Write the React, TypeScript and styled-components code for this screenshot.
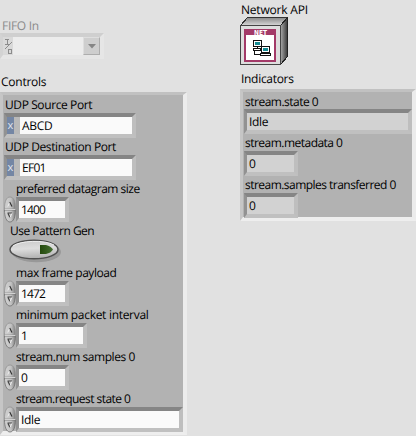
import React from "react";
import styled, { createGlobalStyle } from "styled-components";

const Global = createGlobalStyle`
  body { margin: 0; background: #e1e1e1; }
  * { box-sizing: border-box; }
`;

const Screen = styled.div`
  display: flex;
  justify-content: space-between;
  width: 416px;
  height: 436px;
  overflow: hidden;
  background: #e1e1e1;
  color: #000;
  font-family: "Open Sans", "Noto Sans", sans-serif;
  font-size: 12px;
  text-rendering: geometricPrecision;
`;

const LeftColumn = styled.div`
  width: 187px;
  padding-top: 16px;
`;

const RightColumn = styled.div`
  width: 176px;
`;

const Text = styled.div<{ $x?: number; $track?: number; $h?: number; $top?: number; $dim?: boolean }>`
  height: ${(p) => p.$h ?? 18}px;
  padding-top: ${(p) => p.$top ?? 1}px;
  line-height: 17px;
  padding-left: ${(p) => p.$x ?? 1}px;
  letter-spacing: ${(p) => p.$track ?? -0.4}px;
  color: ${(p) => (p.$dim ? "#8b8b8b" : "#000")};
  white-space: nowrap;
`;

const Cluster = styled.div<{ $h: number }>`
  height: ${(p) => p.$h}px;
  border: solid;
  border-width: 3px 4px 4px 3px;
  border-color: #c1c1c1 #ececec #eeeeee #c6c6c6;
  background: #b2b2b2;
`;

const Item = styled.div<{ $h?: number }>`
  height: ${(p) => p.$h ?? 42}px;
`;

const Line = styled.div`
  display: flex;
  padding-left: 1px;
`;

const Field = styled.div<{ $w: number; $readOnly?: boolean }>`
  display: flex;
  width: ${(p) => p.$w}px;
  height: 25px;
  border: solid;
  border-width: 4px 4px 4px 3px;
  border-color: #858585 #bebebe #c0c0c0 #929292;
  background: ${(p) => (p.$readOnly ? "#d2d2d2" : "#fafafa")};
`;

const Value = styled.span<{ $track?: number }>`
  padding-left: 2px;
  line-height: 17px;
  letter-spacing: ${(p) => p.$track ?? -0.3}px;
`;

const Radix = styled.span`
  width: 13px;
  border-right: 6px solid #b9b9b9;
  background: #7486a4;
  color: #e3e8f0;
  font-size: 11px;
  line-height: 17px;
  text-align: center;
`;

const FifoField = styled.div`
  display: flex;
  width: 104px;
  height: 26px;
  border: solid;
  border-width: 4px 4px 4px 3px;
  border-color: #cfcfcf #e6e6e6 #e6e6e6 #d3d3d3;
  background: #ececec;
`;

const IoMark = styled.svg`
  flex: none;
  width: 10px;
  height: 18px;
  background: #d9d9d9;
`;

const DropButton = styled.div`
  display: flex;
  align-items: center;
  justify-content: center;
  width: 17px;
  height: 18px;
  margin-left: auto;
  border: 1px solid;
  border-color: #dedede #adadad #adadad #dedede;
  background: #cecece;
`;

const SpinSvg = styled.svg`
  flex: none;
  width: 12px;
  height: 27px;
  margin-top: -1px;
`;

const ToggleSvg = styled.svg`
  display: block;
  width: 56px;
  height: 26px;
  margin-left: 5px;
`;

const ApiSvg = styled.svg`
  display: block;
  width: 50px;
  height: 50px;
  margin-top: -1px;
`;

function Spinner() {
  return (
    <SpinSvg viewBox="0 0 12 27">
      <defs>
        <linearGradient id="spin">
          <stop offset="0" stopColor="#d2d2d2" />
          <stop offset=".6" stopColor="#c2c2c2" />
          <stop offset="1" stopColor="#7c7c7c" />
        </linearGradient>
      </defs>
      <path d="M.5 13C.5 5 2.500 1 6 1s5.500 4 5.500 12z" fill="url(#spin)" stroke="#909090" strokeWidth=".8" />
      <path d="M.5 14C.5 21 2.500 26 6 26s5.500-5 5.500-12z" fill="url(#spin)" stroke="#707070" strokeWidth=".8" />
      <path d="M1 13.500h10" stroke="#d2d2d2" />
      <path d="M3.800 10.500L5.800 6" stroke="#eeeeee" />
      <path d="M5.700 6L8 10.500" fill="none" stroke="#333" strokeWidth="1.200" />
      <path d="M3.500 17H8M4 17.500L6 21.500" fill="none" stroke="#444" strokeWidth="1.200" />
      <path d="M6 21.500L7.800 17.500" stroke="#eeeeee" />
    </SpinSvg>
  );
}

function Toggle() {
  return (
    <ToggleSvg viewBox="0 0 56 26">
      <defs>
        <linearGradient id="face" x1="0" y1="0" x2=".15" y2="1">
          <stop offset="0" stopColor="#c8c8c8" />
          <stop offset=".5" stopColor="#dddddd" />
          <stop offset="1" stopColor="#b2b2b2" />
        </linearGradient>
        <linearGradient id="led">
          <stop offset="0" stopColor="#23480c" />
          <stop offset="1" stopColor="#456f30" />
        </linearGradient>
      </defs>
      <ellipse cx="28.500" cy="13" rx="24.500" ry="10.200" fill="#989898" />
      <ellipse cx="26" cy="10.500" rx="24" ry="9.300" fill="url(#face)" stroke="#505050" strokeWidth="1.500" />
      <path d="M5 7C12 1.500 37 .5 46 6" fill="none" stroke="#eeeeee" />
      <path d="M32 6h6q5 1 7 4.500q-2 3.500-7 4.500h-6z" fill="url(#led)" />
    </ToggleSvg>
  );
}

function NetworkCube() {
  return (
    <ApiSvg viewBox="0 0 50 50" shapeRendering="crispEdges">
      <defs>
        <linearGradient id="side" x1="0" y1="0" x2="1" y2="0">
          <stop offset="0" stopColor="#aaa" />
          <stop offset="1" stopColor="#383838" />
        </linearGradient>
        <linearGradient id="top" x1="0" y1="1" x2="0" y2="0">
          <stop offset="0" stopColor="#d8d8d8" />
          <stop offset="1" stopColor="#888" />
        </linearGradient>
      </defs>
      <path d="M.5 8.500L7.500 .5H47.500L40.500 8.500z" fill="url(#top)" stroke="#333" />
      <path d="M40.500 8.500L47.500 .5V39.500L40.500 47.500z" fill="url(#side)" stroke="#222" />
      <path d="M.5 8.500h40v39H.5z" fill="#dedede" stroke="#444" />
      <path d="M4 12h32v33H4z" fill="#a33a68" />
      <path d="M6 18h28v25H6z" fill="#fff" />
      <text x="14" y="18" textLength="13" lengthAdjust="spacingAndGlyphs" fontFamily="DejaVu Sans" fontWeight="700" fontSize="7" fill="#fff">NET</text>
      <path d="M13.500 23.500h8v6h-8z" fill="#fff" stroke="#111" />
      <path d="M15 25h5v3h-5z" fill="#168c94" />
      <path d="M13.500 31.500h7v2h-7zM14.500 34v3h5M17 29.500v2" fill="none" stroke="#111" />
      <path d="M21.500 29.500h8v6h-8z" fill="#fff" stroke="#111" />
      <path d="M23 31h5v3h-5z" fill="#168c94" />
      <path d="M20.500 36.500h10v2h-10z" fill="#fff" stroke="#111" />
    </ApiSvg>
  );
}

interface InputSpec {
  label: string;
  track: number;
  value: string;
  width: number;
  valueTrack?: number;
}

const ports: InputSpec[] = [
  { label: "UDP Source Port", track: -0.4, value: "ABCD", width: 132 },
  { label: "UDP Destination Port", track: -0.4, value: "EF01", width: 132, valueTrack: -0.7 },
];

const payload: InputSpec[] = [
  { label: "max frame payload", track: -0.45, value: "1472", width: 53, valueTrack: -0.9 },
  { label: "minimum packet interval", track: -0.3, value: "1", width: 71 },
  { label: "stream.num samples 0", track: -0.45, value: "0", width: 53 },
  { label: "stream.request state 0", track: -0.55, value: "Idle", width: 167 },
];

const indicators: InputSpec[] = [
  { label: "stream.state 0", track: -0.5, value: "Idle", width: 168 },
  { label: "stream.metadata 0", track: -0.52, value: "0", width: 54 },
  { label: "stream.samples transferred 0", track: -0.53, value: "0", width: 54 },
];

function NumericControl({ label, track, value, width, valueTrack }: InputSpec) {
  return (
    <Item>
      <Text $x={13} $track={track}>{label}</Text>
      <Line>
        <Spinner />
        <Field $w={width}><Value $track={valueTrack}>{value}</Value></Field>
      </Line>
    </Item>
  );
}

export default function App() {
  return (
    <Screen>
      <Global />
      <LeftColumn>
        <Text $x={2} $h={17} $track={-0.3} $dim>FIFO In</Text>
        <FifoField>
          <IoMark viewBox="0 0 10 18" shapeRendering="crispEdges">
            <path d="M2 2.500h4M4 3v4M2 7.500h4M5 12.500h4M5 16.500h4M5.500 12v4M8.500 12v4" fill="none" stroke="#8c8c8c" />
            <path d="M2 12L9 5" stroke="#8c8c8c" shapeRendering="auto" />
          </IoMark>
          <DropButton>
            <svg width="8" height="5" viewBox="0 0 8 5"><path d="M0 0h8L4 4.500z" fill="#858585" /></svg>
          </DropButton>
        </FifoField>
        <Text $h={33} $top={14} $track={-0.25}>Controls</Text>
        <Cluster $h={343}>
          {ports.map((p) => (
            <Item key={p.label}>
              <Text $x={2} $track={p.track}>{p.label}</Text>
              <Line>
                <Field $w={132}><Radix>x</Radix><Value $track={p.valueTrack}>{p.value}</Value></Field>
              </Line>
            </Item>
          ))}
          <NumericControl label="preferred datagram size" track={-0.5} value="1400" width={53} valueTrack={-0.9} />
          <Item>
            <Text $x={7} $track={-0.5}>Use Pattern Gen</Text>
            <Toggle />
          </Item>
          {payload.map((p) => <NumericControl key={p.label} {...p} />)}
        </Cluster>
      </LeftColumn>
      <RightColumn>
        <Text $track={-0.2}>Network API</Text>
        <NetworkCube />
        <Text $h={22} $top={3} $track={-0.3}>Indicators</Text>
        <Cluster $h={132}>
          {indicators.map((p, i) => (
            <Item key={p.label} $h={i === 0 ? 41 : 42}>
              <Text $x={2} $h={i === 0 ? 17 : 18} $track={p.track}>{p.label}</Text>
              <Line>
                <Field $w={p.width} $readOnly><Value>{p.value}</Value></Field>
              </Line>
            </Item>
          ))}
        </Cluster>
      </RightColumn>
    </Screen>
  );
}
